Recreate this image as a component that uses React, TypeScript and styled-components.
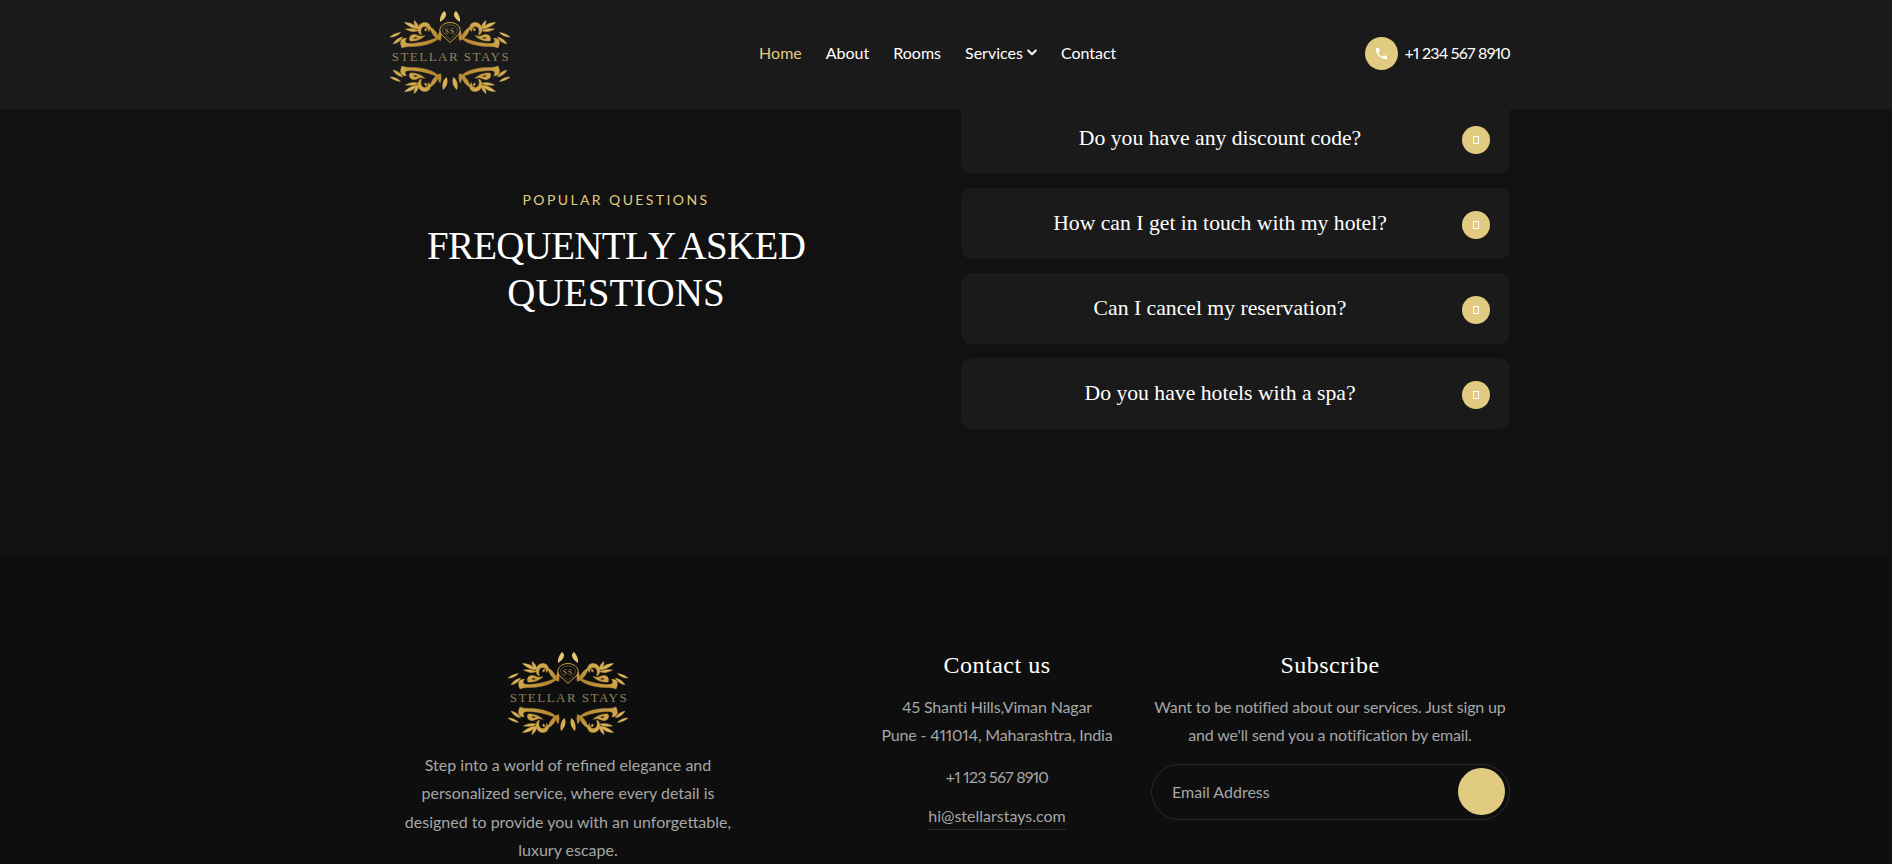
import React from 'react'
import styled, { createGlobalStyle } from 'styled-components'

const GOLD = '#e0cb80'
const SANS = '"Lato", "Noto Sans", sans-serif'
const SERIF = '"Liberation Serif", serif'

const GlobalStyle = createGlobalStyle`
  html, body {
    margin: 0;
    padding: 0;
    height: 864px;
    overflow: hidden;
    background: #0e0e0e;
  }
  * {
    box-sizing: border-box;
  }
`

const Page = styled.div`
  width: 1892px;
  height: 864px;
  overflow: hidden;
  font-family: ${SANS};
  font-variant-numeric: proportional-nums;
`

const Header = styled.header`
  position: fixed;
  top: 0;
  left: 0;
  right: 0;
  height: 110px;
  background: #1a1a1a;
  z-index: 2;
`

const Inner = styled.div`
  width: 1120px;
  margin-left: 390px;
`

const HeaderInner = styled(Inner)`
  height: 100%;
  display: flex;
  align-items: center;
  justify-content: space-between;
  padding-bottom: 4px;
`

const Nav = styled.nav`
  display: flex;
  align-items: center;
  gap: 24px;
  margin-bottom: 2px;
`

const NavLink = styled.a<{ $active?: boolean }>`
  display: flex;
  align-items: center;
  gap: 4px;
  font-size: 16px;
  font-weight: 400;
  color: ${({ $active }) => ($active ? GOLD : '#fff')};
`

const Phone = styled.div`
  display: flex;
  align-items: center;
  gap: 6px;
  color: #fff;
  font-size: 16px;
  letter-spacing: -0.75px;
`

const PhoneNumber = styled.span`
  margin-top: -2px;
`

const PhoneIcon = styled.span`
  width: 33px;
  height: 33px;
  border-radius: 50%;
  background: ${GOLD};
  display: flex;
  align-items: center;
  justify-content: center;
`

const Main = styled.main`
  background: #111;
  padding-top: 103px;
  height: 557px;
`

const FaqGrid = styled(Inner)`
  display: grid;
  grid-template-columns: 452px 549px;
  column-gap: 119px;
`

const Intro = styled.div`
  padding-top: 87px;
  text-align: center;
`

const Eyebrow = styled.div`
  font-size: 14px;
  line-height: 20px;
  letter-spacing: 2.4px;
  color: ${GOLD};
`

const Title = styled.h2`
  margin: 12px 0 0;
  font-family: ${SERIF};
  font-size: 39px;
  line-height: 47px;
  font-weight: 400;
  font-kerning: none;
  letter-spacing: -0.7px;
  word-spacing: -6px;
  color: #fff;
`

const TitleLine = styled.span`
  display: block;
  letter-spacing: 0.1px;
`

const Questions = styled.div`
  display: flex;
  flex-direction: column;
  gap: 14px;
`

const Question = styled.div`
  height: 71px;
  display: flex;
  align-items: center;
  gap: 3px;
  padding: 0 20px;
  background: #1a1a1a;
  border-radius: 10px;
`

const QuestionText = styled.div`
  flex: 1;
  text-align: center;
  font-family: ${SERIF};
  font-size: 21.7px;
  color: #fff;
`

const Toggle = styled.span`
  width: 28px;
  height: 28px;
  margin-top: 3px;
  border-radius: 50%;
  background: ${GOLD};
  display: flex;
  align-items: center;
  justify-content: center;
`

const MissingGlyph = styled.i`
  width: 6px;
  height: 8px;
  border: 1px solid #fff;
`

const Footer = styled.footer`
  padding-top: 95px;
`

const FooterGrid = styled(Inner)`
  display: grid;
  grid-template-columns: 454px 306px 360px;
`

const BrandCol = styled.div`
  width: 356px;
  display: flex;
  flex-direction: column;
  align-items: center;
  text-align: center;
`

const FooterCol = styled.div`
  text-align: center;
`

const FooterText = styled.p`
  margin: 0;
  font-size: 16px;
  line-height: 28.4px;
  color: #a6a6a6;
`

const BrandText = styled(FooterText)`
  margin-top: 15px;
  width: 340px;
`

const ColTitle = styled.h4`
  margin: -1px 0 13.5px;
  font-family: ${SERIF};
  font-size: 24px;
  line-height: 28px;
  font-weight: 400;
  letter-spacing: 0.5px;
  color: #fff;
`

const TightText = styled(FooterText)`
  letter-spacing: -0.15px;
`

const ContactLine = styled(FooterText)`
  margin-top: 14px;
  letter-spacing: -0.75px;
`

const MailLink = styled.a`
  display: inline-block;
  margin-top: 11px;
  line-height: 26px;
  font-size: 16px;
  color: #a6a6a6;
  border-bottom: 1px solid #2a2a2a;
`

const SubscribeForm = styled.form`
  margin-top: 14.5px;
  margin-left: 1px;
  height: 56px;
  display: flex;
  align-items: center;
  justify-content: space-between;
  padding: 0 4px 0 20px;
  border: 1px solid #2a2a2a;
  border-radius: 28px;
`

const Placeholder = styled.span`
  font-size: 16px;
  color: #a6a6a6;
`

const SubmitDot = styled.span`
  width: 47px;
  height: 47px;
  border-radius: 50%;
  background: ${GOLD};
`

const LogoSvg = styled.svg`
  display: block;
  width: 120px;
  height: 84px;
  flex: none;
`

function Ornament() {
  return (
    <g fill="url(#logoGold)" stroke="url(#logoGold)" strokeWidth="0.4">
      {/* long band with its end curl */}
      <path d="M12 37C9 31 11 26.500 16.500 27.500C14 29.500 15 32.500 19 32.500C29 32.500 39 30 50 25.500C46 31.500 36 35 23 35.500C18 35.700 14.500 35.500 12 37Z" />
      <path d="M20 30C17.500 25 23 21.500 28 24.500C30 25.500 32 25.500 35 24.500C32 28 26 30.500 20 30ZM23.500 27.500C25 28 27 27.500 28 27C26.500 25.500 24 25.500 23.500 27.500Z" />
      {/* upper scroll */}
      <path d="M30 23.500C26 19 28.500 11.500 35 11.500C40.500 11.500 42 17.500 38.500 20.500C38.500 17.500 37 15.500 34.500 15.500C31 15.500 30 20 31.500 23.500Z" />
      <path d="M35 20C34 18 35.500 16.800 36.800 17.500C37 19 36.500 20 35 20Z" />
      {/* leaf spray */}
      <path d="M28.500 18C24 17.500 19 16 14.500 11.500C19.500 11.500 23 13 25.500 15.500C24.500 13.500 24 11.500 24 9.500C27 11.500 29 14.500 28.500 18Z" />
      <path d="M28.500 19.500C24.500 21.500 20 20.500 15.500 18C20.500 17.500 25 17.500 28.500 19.500Z" />
      {/* small loose leaves */}
      <path d="M0 26C3 23.200 6.500 22 10.500 21.500C8 24.500 4 26.200 0 26Z" />
      <path d="M3 32.800C5 29.500 8 27 12.500 26C11 29.500 7.500 32.300 3 32.800Z" />
      {/* leaves beside the shield */}
      <path d="M50.500 29.500C45 27.500 41.500 23 39.500 15.500C44 18 47 21.500 48 25C48.500 23 49 21.500 50 20C51.500 23.500 51.500 27 50.500 29.500Z" />
    </g>
  )
}

function Logo() {
  return (
    <LogoSvg viewBox="0 0 120 84" aria-label="Stellar Stays">
      <defs>
        <linearGradient id="logoGold" gradientUnits="userSpaceOnUse" x1="0" y1="0" x2="30" y2="40">
          <stop offset="0" stopColor="#f3dc8a" />
          <stop offset="0.55" stopColor="#d8ae50" />
          <stop offset="1" stopColor="#b98a34" />
        </linearGradient>
        <g id="logoSide">
          <Ornament />
        </g>
      </defs>
      <use href="#logoSide" />
      <use href="#logoSide" transform="translate(120 0) scale(-1 1)" />
      <use href="#logoSide" transform="translate(0 92) scale(1 -1)" />
      <use href="#logoSide" transform="translate(120 92) scale(-1 -1)" />
      {/* top leaves */}
      <path d="M50 11C49.500 7 51 3 54 0C57.500 2 56.500 7.500 50 11Z" fill="#e5c670" />
      <path d="M70 11C70.500 7 69 3 66 0C62.500 2 63.500 7.500 70 11Z" fill="#e5c670" />
      {/* bottom leaves */}
      <path d="M53 79C51.500 74 53 69 56.500 66C58.500 70 57.500 75 53 79Z" fill="#d8ae50" />
      <path d="M67 79C68.500 74 67 69 63.500 66C61.500 70 62.500 75 67 79Z" fill="#d8ae50" />
      {/* shield */}
      <path d="M60 31.500L51 23C47.500 18 52 11.500 60 11.500C68 11.500 72.500 18 69 23Z" fill="none" stroke="#c99f45" strokeWidth="1" />
      <path d="M60 28.500L53.500 22C51 18 54 14 60 14C66 14 69 18 66.500 22Z" fill="none" stroke="#8a6e30" strokeWidth="0.6" />
      <text x="60" y="22.500" textAnchor="middle" fontFamily={SERIF} fontSize="7.5" fill="#b59a55" letterSpacing="1">SS</text>
      <text x="1.7" y="49.500" textLength="117" lengthAdjust="spacing" fontFamily={SERIF} fontSize="13" fill="#8f8256">STELLAR STAYS</text>
    </LogoSvg>
  )
}

const questions = [
  'Do you have any discount code?',
  'How can I get in touch with my hotel?',
  'Can I cancel my reservation?',
  'Do you have hotels with a spa?',
]

export default function App() {
  return (
    <Page>
      <GlobalStyle />
      <Header>
        <HeaderInner>
          <Logo />
          <Nav>
            <NavLink $active>Home</NavLink>
            <NavLink>About</NavLink>
            <NavLink>Rooms</NavLink>
            <NavLink>
              Services
              <svg width="10" height="7" viewBox="0 0 10 7" fill="none" stroke="#fff" strokeWidth="2" strokeLinecap="round" strokeLinejoin="round">
                <path d="M1.200 1.500L5 5.200L8.800 1.500" />
              </svg>
            </NavLink>
            <NavLink>Contact</NavLink>
          </Nav>
          <Phone>
            <PhoneIcon>
              <svg width="15" height="15" viewBox="0 0 24 24" fill="#fff">
                <path d="M6.600 10.800c1.400 2.800 3.800 5.100 6.600 6.600l2.200-2.200c.3-.3.7-.4 1-.2 1.100.4 2.300.6 3.600.6.600 0 1 .4 1 1V20c0 .6-.4 1-1 1C10.600 21 3 13.400 3 4c0-.6.4-1 1-1h3.500c.6 0 1 .4 1 1 0 1.300.2 2.500.6 3.600.1.300 0 .7-.2 1l-2.300 2.200z" />
              </svg>
            </PhoneIcon>
            <PhoneNumber>+1 234 567 8910</PhoneNumber>
          </Phone>
        </HeaderInner>
      </Header>

      <Main>
        <FaqGrid>
          <Intro>
            <Eyebrow>POPULAR QUESTIONS</Eyebrow>
            <Title>
              FREQUENTLY ASKED
              <TitleLine>QUESTIONS</TitleLine>
            </Title>
          </Intro>
          <Questions>
            {questions.map((q) => (
              <Question key={q}>
                <QuestionText>{q}</QuestionText>
                <Toggle>
                  <MissingGlyph />
                </Toggle>
              </Question>
            ))}
          </Questions>
        </FaqGrid>
      </Main>

      <Footer>
        <FooterGrid>
          <BrandCol>
            <Logo />
            <BrandText>
              Step into a world of refined elegance and personalized service, where every detail is designed to provide you with an unforgettable, luxury escape.
            </BrandText>
          </BrandCol>
          <FooterCol>
            <ColTitle>Contact us</ColTitle>
            <TightText>
              45 Shanti Hills,Viman Nagar
              <br />
              Pune - 411014, Maharashtra, India
            </TightText>
            <ContactLine>+1 123 567 8910</ContactLine>
            <MailLink>hi@stellarstays.com</MailLink>
          </FooterCol>
          <FooterCol>
            <ColTitle>Subscribe</ColTitle>
            <TightText>
              Want to be notified about our services. Just sign up
              <br />
              and we'll send you a notification by email.
            </TightText>
            <SubscribeForm>
              <Placeholder>Email Address</Placeholder>
              <SubmitDot />
            </SubscribeForm>
          </FooterCol>
        </FooterGrid>
      </Footer>
    </Page>
  )
}
